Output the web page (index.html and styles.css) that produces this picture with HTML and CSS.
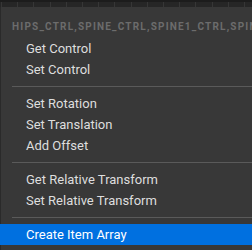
FILE: index.html
```html
<!DOCTYPE html>
<html lang="en">
<head>
    <meta charset="UTF-8">
    <title>Context Menu</title>
    <link rel="stylesheet" href="styles.css">
</head>
<body>
    <div class="ruler"></div>
    <div class="menu">
        <div class="menu-title">HIPS_CTRL,SPINE_CTRL,SPINE1_CTRL,SPINE2_CTRL</div>

        <div class="menu-item">Get Control</div>
        <div class="menu-item">Set Control</div>
        <div class="separator"></div>

        <div class="menu-item">Set Rotation</div>
        <div class="menu-item">Set Translation</div>
        <div class="menu-item">Add Offset</div>
        <div class="separator"></div>

        <div class="menu-item">Get Relative Transform</div>
        <div class="menu-item">Set Relative Transform</div>
        <div class="separator"></div>

        <div class="menu-item active">Create Item Array</div>
    </div>
</body>
</html>
```

FILE: styles.css
```css
body {
    margin: 0;
    width: 252px;
    height: 250px;
    overflow: hidden;
    background-color: #383838;
    font-family: Roboto, "Liberation Sans", sans-serif;
}

.ruler {
    height: 7px;
    background-color: #262626;
    background-image:
        linear-gradient(#1c1c1c, #1c1c1c),
        repeating-linear-gradient(90deg, #363636 0 1px, transparent 1px 16.2px);
    background-size: 100% 2px, 100% 100%;
    background-repeat: no-repeat, repeat;
    background-position: 0 0, 1px 0;
}

.menu {
    box-shadow: inset 1px 0 #2a2a2a;
    height: 243px;
    overflow: hidden;
}

.menu-title {
    padding: 14px 0 0 12px;
    margin-bottom: 5px;
    font-size: 10px;
    line-height: 12px;
    font-weight: bold;
    letter-spacing: 1.2px;
    color: #6c6c6c;
    white-space: nowrap;
    overflow: hidden;
}

.menu-item {
    height: 21px;
    line-height: 21px;
    padding-left: 26px;
    font-size: 13px;
    color: #dedede;
    white-space: nowrap;
}

.menu-item.active {
    background-color: #0070e0;
    color: #ffffff;
}

.separator {
    height: 1px;
    margin: 6px 0 6px 12px;
    background-color: #5a5a5a;
}
```
